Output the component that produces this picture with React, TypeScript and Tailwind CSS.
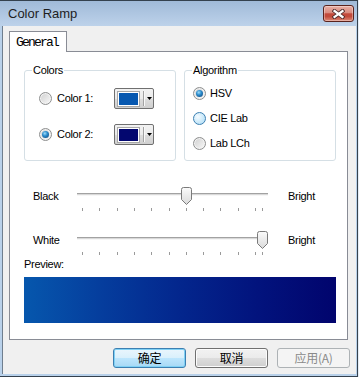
import React from 'react';

type RadioState = 'on' | 'off' | 'hover';

const MAX = 260;
const TICKS = [0, 25, 50, 75, 100, 125, 150, 175, 200, 225, 250, 260];
const tickX = (v: number) => 5 + (v / MAX) * 180;

const Radio: React.FC<{ state: RadioState }> = ({ state }) => {
  if (state === 'hover') {
    return (
      <div className="w-[13px] h-[13px] shrink-0 rounded-full border border-[#3c7fb1] bg-[radial-gradient(circle_at_35%_35%,#f4fbff,#bfe4f8_70%,#a9d9f5)]" />
    );
  }
  return (
    <div className="w-[13px] h-[13px] shrink-0 rounded-full border border-[#8e8f8f] bg-[linear-gradient(135deg,#cfcfcf,#f9f9f9)] shadow-[inset_0_0_0_1px_#f3f3f3] flex items-center justify-center">
      {state === 'on' && (
        <div className="w-[7px] h-[7px] rounded-full bg-[radial-gradient(circle_at_40%_35%,#9fdcf9_0%,#2b8ccd_40%,#0c3e72_100%)]" />
      )}
    </div>
  );
};

const ColorPick: React.FC<{ swatch: string }> = ({ swatch }) => (
  <div className="w-[40px] h-[21px] rounded-[2px] border border-[#707070] bg-[linear-gradient(180deg,#f2f2f2_0%,#ebebeb_50%,#dddddd_50%,#cfcfcf_100%)] flex items-center">
    <div className="ml-[2px] w-[23px] h-[16px] border border-[#a8a8a8] bg-white p-[1px]">
      <div className={`w-full h-full ${swatch}`} />
    </div>
    <div className="ml-[3px] w-[1px] h-[15px] bg-[#a2a2a2]" />
    <div className="w-[1px] h-[15px] bg-[#f8f8f8]" />
    <svg className="ml-[2px]" width="5" height="3" viewBox="0 0 5 3">
      <path d="M0 0 H5 L2.5 3 Z" fill="#000" />
    </svg>
  </div>
);

const Thumb = () => (
  <svg width="11" height="18" viewBox="0 0 11 18">
    <defs>
      <linearGradient id="tg" x1="0" y1="0" x2="0" y2="1">
        <stop offset="0" stopColor="#fbfbfb" />
        <stop offset="1" stopColor="#dadada" />
      </linearGradient>
    </defs>
    <path d="M0.5 2.5 Q0.5 0.5 2.5 0.5 H8.5 Q10.5 0.5 10.5 2.5 V12.5 L5.5 17.5 L0.5 12.5 Z" fill="url(#tg)" stroke="#7a7a7a" />
  </svg>
);

const Slider: React.FC<{ label: string; value: number }> = ({ label, value }) => (
  <div className="flex items-start pl-[23px]">
    <div className="w-[44px] h-[18px] flex items-center">{label}</div>
    <div className="relative w-[191px] h-[25px]">
      <div className="mt-[6px] h-[3px] border-t border-[#a2a2a2] bg-[#d9d9d9] border-b border-b-[#f6f6f6]" />
      <div className="relative mt-[12px] h-[3px]">
        {TICKS.map(t => (
          <div key={t} className="absolute top-0 w-[1px] h-[3px] bg-[#9a9a9a]" style={{ left: Math.round(tickX(t)) }} />
        ))}
      </div>
      <div className="absolute top-0" style={{ left: Math.round(tickX(value) - 5) }}>
        <Thumb />
      </div>
    </div>
    <div className="ml-[20px] h-[18px] flex items-center">Bright</div>
  </div>
);

const Group: React.FC<{ title: string; children: React.ReactNode; className?: string }> = ({ title, children, className }) => (
  <div className={`relative w-[152px] h-[91px] rounded-[3px] border border-[#d5dfe5] ${className ?? ''}`}>
    <span className="absolute -top-[7px] left-[7px] px-[1px] bg-white leading-[13px]">{title}</span>
    {children}
  </div>
);

const Btn: React.FC<{ kind: 'default' | 'normal' | 'disabled'; children: React.ReactNode }> = ({ kind, children }) => {
  const base = "w-[73px] h-[20px] rounded-[3px] border flex items-center justify-center text-[12px] leading-[14px] font-['Noto_Sans_CJK_SC',sans-serif]";
  if (kind === 'default')
    return (
      <div className={`${base} border-[#3c7fb1] bg-[linear-gradient(180deg,#eaf6fd_0%,#d9f0fc_50%,#bee6fd_50%,#a7d9f5_100%)] shadow-[inset_0_0_0_1px_#7fd1f5] text-black`}>
        {children}
      </div>
    );
  if (kind === 'normal')
    return (
      <div className={`${base} border-[#707070] bg-[linear-gradient(180deg,#f2f2f2_0%,#ebebeb_50%,#dddddd_50%,#cfcfcf_100%)] shadow-[inset_0_0_0_1px_#fcfcfc] text-black`}>
        {children}
      </div>
    );
  return <div className={`${base} border-[#adb2b5] bg-[#f4f4f4] text-[#8a8a8a]`}>{children}</div>;
};

export default function App() {
  return (
    <div className="w-[359px] h-[377px] bg-[#e4ecf5] font-['Liberation_Sans',Arial,sans-serif] text-[11px] tracking-[-0.3px] text-black">
      <div className="w-[358px] h-[377px] flex flex-col border-t border-r border-b border-[#34414e] bg-[#b9d1ea]">
        {/* title bar */}
        <div className="h-[25px] shrink-0 flex items-center bg-[linear-gradient(180deg,#a0bad8,#bdd2ea)]">
          <span className="pl-[8px] text-[13px] leading-[15px] tracking-normal text-[#1e1e1e]">Color Ramp</span>
          <div className="ml-auto mr-[3px] self-start mt-[4px] w-[31px] h-[17px] rounded-[3px] border border-[#5a231d] bg-[linear-gradient(180deg,#eab0a6_0%,#d98b7f_45%,#c3493b_52%,#c24b3b_70%,#de8a77_100%)] shadow-[inset_0_0_0_1px_rgba(255,255,255,0.35)] flex items-center justify-center">
            <svg width="13" height="10" viewBox="0 0 13 10">
              <path d="M2.5 2 L10.5 8 M10.5 2 L2.5 8" stroke="#4b2a2a" strokeWidth="4" strokeLinecap="square" />
              <path d="M2.5 2 L10.5 8 M10.5 2 L2.5 8" stroke="#ffffff" strokeWidth="2.2" strokeLinecap="square" />
            </svg>
          </div>
        </div>

        {/* client */}
        <div className="flex-1 ml-[2px] mr-[1px] mb-[2px] border-l border-[#6f7e8e] bg-[#f0f0f0] pl-[6px] pt-[5px] flex flex-col">
          <div className="relative z-10 -mb-[1px] w-[58px] h-[21px] border-l border-t border-r border-[#898c95] bg-white pl-[6px] pt-[2px]">
            <span className="font-['Liberation_Mono',monospace] text-[13px] leading-[16px] tracking-[-1.8px]">General</span>
          </div>

          <div className="w-[339px] h-[289px] border border-[#898c95] bg-white flex flex-col">
            <div className="mt-[18px] ml-[14px] flex gap-[8px]">
              <Group title="Colors">
                <div className="pt-[17px] pl-[14px] flex flex-col gap-[15px]">
                  <div className="flex items-center h-[21px]">
                    <Radio state="off" />
                    <span className="ml-[5px] w-[57px]">Color 1:</span>
                    <ColorPick swatch="bg-[#0758b0]" />
                  </div>
                  <div className="flex items-center h-[21px]">
                    <Radio state="on" />
                    <span className="ml-[5px] w-[57px]">Color 2:</span>
                    <ColorPick swatch="bg-[#03076f]" />
                  </div>
                </div>
              </Group>
              <Group title="Algorithm">
                <div className="pt-[16px] pl-[8px] flex flex-col gap-[12px]">
                  <div className="flex items-center h-[13px]">
                    <Radio state="on" />
                    <span className="ml-[4px]">HSV</span>
                  </div>
                  <div className="flex items-center h-[13px]">
                    <Radio state="hover" />
                    <span className="ml-[4px]">CIE Lab</span>
                  </div>
                  <div className="flex items-center h-[13px]">
                    <Radio state="off" />
                    <span className="ml-[4px]">Lab LCh</span>
                  </div>
                </div>
              </Group>
            </div>

            <div className="mt-[26px] flex flex-col gap-[19px]">
              <Slider label="Black" value={150} />
              <Slider label="White" value={260} />
            </div>

            <div className="mt-[2px] ml-[14px] leading-[13px]">Preview:</div>
            <div className="mt-[6px] ml-[14px] w-[312px] h-[46px] bg-[linear-gradient(90deg,#0657ad,#053d9d_25%,#03268d_50%,#02137d_75%,#01046d)]" />
          </div>

          <div className="mt-[8px] pr-[6px] flex justify-end gap-[9px]">
            <Btn kind="default">确定</Btn>
            <Btn kind="normal">取消</Btn>
            <Btn kind="disabled">应用(A)</Btn>
          </div>
        </div>
      </div>
    </div>
  );
}
